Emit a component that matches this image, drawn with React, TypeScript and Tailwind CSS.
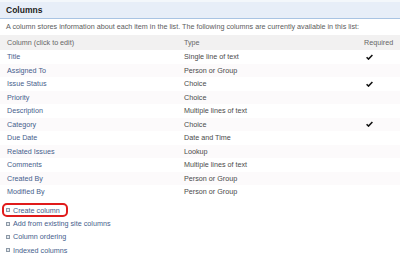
const ROWS = [
  { name: 'Title', type: 'Single line of text', required: true },
  { name: 'Assigned To', type: 'Person or Group', required: false },
  { name: 'Issue Status', type: 'Choice', required: true },
  { name: 'Priority', type: 'Choice', required: false },
  { name: 'Description', type: 'Multiple lines of text', required: false },
  { name: 'Category', type: 'Choice', required: true },
  { name: 'Due Date', type: 'Date and Time', required: false },
  { name: 'Related Issues', type: 'Lookup', required: false },
  { name: 'Comments', type: 'Multiple lines of text', required: false },
  { name: 'Created By', type: 'Person or Group', required: false },
  { name: 'Modified By', type: 'Person or Group', required: false },
];

const LINKS = ['Create column', 'Add from existing site columns', 'Column ordering', 'Indexed columns'];

function Check() {
  return (
    <svg width="7" height="6" viewBox="0 0 7 6" className="block">
      <path d="M0.6 3.2 L2.5 5.1 L6.4 0.9" fill="none" stroke="#111" strokeWidth="1.5" />
    </svg>
  );
}

function Bullet() {
  return <span className="inline-block h-[4px] w-[4px] border border-[#8d99a6] bg-[#e3e8ee]" />;
}

export default function App() {
  return (
    <div className="h-[256px] w-[400px] overflow-hidden bg-white text-[7.2px] leading-none" style={{ fontFamily: '"Liberation Sans", Arial, sans-serif' }}>
      <div className="flex h-[19px] items-center border-t-2 border-b border-t-[#f3f7fb] border-b-[#a9c4e3] bg-[#e7eef8] pl-[6px] text-[8.5px] font-bold text-[#1c1c1c]">
        Columns
      </div>
      <div className="flex h-[16px] items-center pl-[6px] text-[#5c5c5c]">
        A column stores information about each item in the list. The following columns are currently available in this list:
      </div>
      <div className="flex h-[15px] items-center bg-[#f2f1f1] text-[#666]">
        <div className="w-[184px] pl-[7px]">Column (click to edit)</div>
        <div className="w-[180px]">Type</div>
        <div>Required</div>
      </div>
      {ROWS.map((r, i) => (
        <div key={r.name} className={`flex h-[13.5px] items-center ${i % 2 ? 'bg-[#fcfafb]' : 'bg-white'}`}>
          <div className="w-[184px] pl-[7px] text-[#46608c]">{r.name}</div>
          <div className="w-[182px] text-[#4a4a4a]">{r.type}</div>
          {r.required && <Check />}
        </div>
      ))}
      <div className="mt-[5px] flex flex-col">
        {LINKS.map((l, i) => (
          <div key={l} className="flex h-[13.4px] items-center">
            <div
              className={`ml-[2px] flex h-[14px] items-center gap-[3px] pl-[2px] pr-[6px] ${i === 0 ? 'rounded-[5px] border-2 border-[#e01b1b]' : 'border-2 border-transparent'}`}
            >
              <Bullet />
              <span className="text-[#46608c]">{l}</span>
            </div>
          </div>
        ))}
      </div>
    </div>
  );
}
